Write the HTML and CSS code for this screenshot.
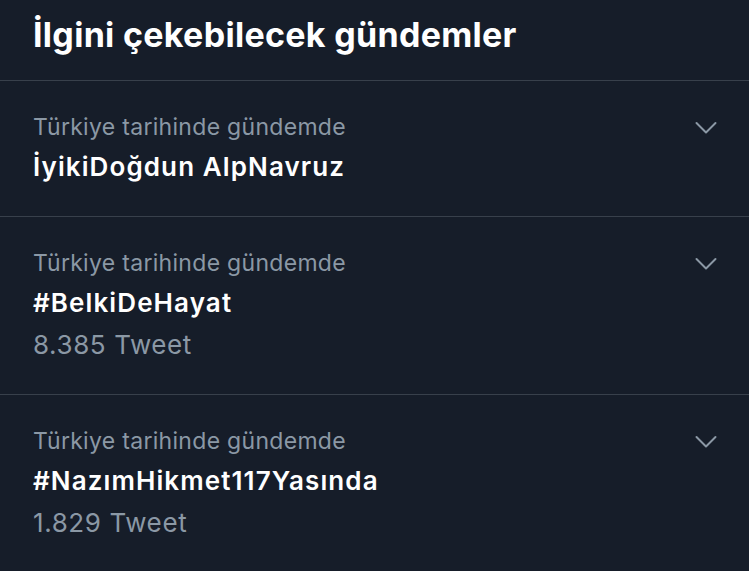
FILE: index.html
```html
<!DOCTYPE html>
<html lang="tr">
<head>
<meta charset="utf-8">
<link rel="stylesheet" href="styles.css">
</head>
<body>
<div class="panel">
  <h1 class="title">İlgini çekebilecek gündemler</h1>
  <div class="item">
    <div class="text">
      <div class="label">Türkiye tarihinde gündemde</div>
      <div class="name">İyikiDoğdun AlpNavruz</div>
    </div>
    <svg class="chev" viewBox="0 0 22 14" width="22" height="14"><path d="M1.5 2 L11 11.5 L20.5 2" fill="none" stroke="#8b98a5" stroke-width="2" stroke-linecap="round" stroke-linejoin="round"/></svg>
  </div>
  <div class="item">
    <div class="text">
      <div class="label">Türkiye tarihinde gündemde</div>
      <div class="name">#BelkiDeHayat</div>
      <div class="count">8.385 Tweet</div>
    </div>
    <svg class="chev" viewBox="0 0 22 14" width="22" height="14"><path d="M1.5 2 L11 11.5 L20.5 2" fill="none" stroke="#8b98a5" stroke-width="2" stroke-linecap="round" stroke-linejoin="round"/></svg>
  </div>
  <div class="item last">
    <div class="text">
      <div class="label">Türkiye tarihinde gündemde</div>
      <div class="name">#NazımHikmet117Yasında</div>
      <div class="count">1.829 Tweet</div>
    </div>
    <svg class="chev" viewBox="0 0 22 14" width="22" height="14"><path d="M1.5 2 L11 11.5 L20.5 2" fill="none" stroke="#8b98a5" stroke-width="2" stroke-linecap="round" stroke-linejoin="round"/></svg>
  </div>
</div>
</body>
</html>
```

FILE: styles.css
```css
html, body {
  margin: 0;
  padding: 0;
  background: #161d29;
}
body {
  width: 749px;
  height: 571px;
  overflow: hidden;
  font-family: Inter, "Liberation Sans", sans-serif;
}
.panel {
  display: flex;
  flex-direction: column;
}
.title {
  margin: 0;
  height: 81px;
  box-sizing: border-box;
  padding: 15px 33px 0;
  font-size: 34px;
  font-weight: 700;
  line-height: 40px;
  color: #ffffff;
  border-bottom: 1px solid #38404b;
  letter-spacing: 0.3px;
}
.item {
  display: flex;
  justify-content: space-between;
  align-items: flex-start;
  padding: 29px 32px 29px 33px;
  border-bottom: 1px solid #38404b;
}
.item.last {
  border-bottom: none;
}
.text {
  display: flex;
  flex-direction: column;
}
.label {
  font-size: 23px;
  line-height: 34px;
  color: #8b98a5;
  letter-spacing: 0.3px;
}
.name {
  font-size: 26px;
  font-weight: 600;
  line-height: 40px;
  color: #ffffff;
  margin-top: 3px;
  letter-spacing: 1.1px;
}
.count {
  font-size: 26px;
  line-height: 40px;
  color: #8b98a5;
  margin-top: 2px;
  letter-spacing: 0.6px;
}
.chev {
  margin-top: 11px;
}
```
